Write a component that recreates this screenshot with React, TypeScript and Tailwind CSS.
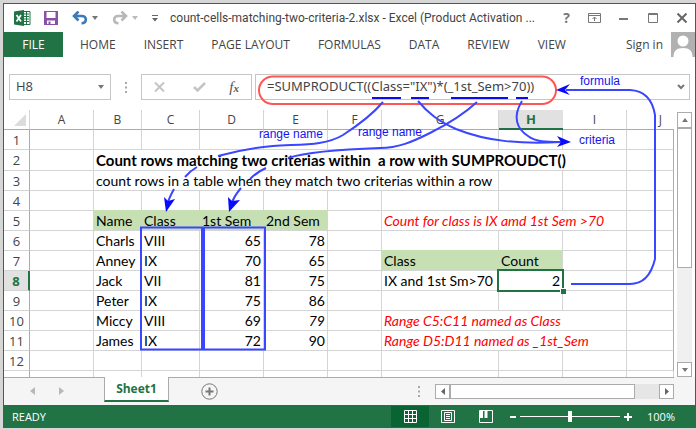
import { Fragment } from 'react';

const tabs = ['HOME', 'INSERT', 'PAGE LAYOUT', 'FORMULAS', 'DATA', 'REVIEW', 'VIEW'];

const columns = [
  { name: 'A', width: 'w-16' },
  { name: 'B', width: 'w-12' },
  { name: 'C', width: 'w-[58px]' },
  { name: 'D', width: 'w-16' },
  { name: 'E', width: 'w-16' },
  { name: 'F', width: 'w-[54px]' },
  { name: 'G', width: 'w-[117px]' },
  { name: 'H', width: 'w-16' },
  { name: 'I', width: 'w-16' },
  { name: 'J', width: '' },
];

type Cell = { text: string; span?: number; className?: string };

const head = 'bg-[#c6e0b4] border-[#c6e0b4] shadow-[-1px_-1px_0_#c6e0b4]';
const note = 'italic text-[#f00]';

const cells: Record<string, Cell> = {
  B2: { text: 'Count rows matching two criterias within\u00a0 a row with SUMPROUDCT()', span: 8, className: 'text-[15px] font-bold' },
  B3: { text: 'count rows in a table when they match two criterias within a row', span: 6 },
  B5: { text: 'Name', className: head },
  C5: { text: 'Class', className: head },
  D5: { text: '1st Sem', className: head },
  E5: { text: '2nd Sem', className: head },
  G5: { text: 'Count for class is IX amd 1st Sem >70', span: 3, className: note },
  G7: { text: 'Class', className: head },
  H7: { text: 'Count', className: head },
  G8: { text: 'IX and 1st Sm>70' },
  H8: { text: '2', className: 'text-right' },
  G10: { text: 'Range C5:C11 named as Class', span: 3, className: note },
  G11: { text: 'Range D5:D11 named as _1st_Sem', span: 3, className: note },
};

const students = [
  ['Charls', 'VIII', '65', '78'],
  ['Anney', 'IX', '70', '65'],
  ['Jack', 'VII', '81', '75'],
  ['Peter', 'IX', '75', '86'],
  ['Miccy', 'VIII', '69', '79'],
  ['James', 'IX', '72', '90'],
];

students.forEach(([name, grade, first, second], i) => {
  const row = i + 6;
  cells[`B${row}`] = { text: name };
  cells[`C${row}`] = { text: grade };
  cells[`D${row}`] = { text: first, className: 'text-right' };
  cells[`E${row}`] = { text: second, className: second === '79' ? 'text-right italic' : 'text-right' };
});

function Caret({ className }: { className?: string }) {
  return (
    <svg className={className} width="6" height="4" viewBox="0 0 6 4" fill="currentColor">
      <path d="M0 0h6L3 4z" />
    </svg>
  );
}

function Dots() {
  return (
    <svg width="2" height="11" viewBox="0 0 2 11" fill="#a8a8a8">
      <path d="M0 0h2v2H0zM0 4.500h2v2H0zM0 9h2v2H0z" />
    </svg>
  );
}

function TitleBar() {
  return (
    <div className="flex h-7 items-center pl-[10px] pr-2 text-[#777]">
      <svg width="17" height="16" viewBox="0 0 17 16">
        <path d="M9 1.500h7v13H9z" fill="#fff" stroke="#217346" />
        <path d="M10 4h5M10 6.500h5M10 9h5M10 11.500h5M12.500 2v12" stroke="#217346" />
        <path d="M0 1.500 10 0v16L0 14.500z" fill="#217346" />
        <path d="m2.500 5 4.500 6.500M7 5l-4.500 6.500" stroke="#fff" strokeWidth="1.700" />
      </svg>
      <button aria-label="Save" className="ml-[13px]">
        <svg width="14" height="14" viewBox="0 0 14 14">
          <path d="M0 0h14v14H0z" fill="#8a50a8" />
          <path d="M2.500 1h9v6h-9zM3 9.500h8V13H6.500v-2.500h-2V13H3z" fill="#fff" />
        </svg>
      </button>
      <button aria-label="Undo" className="ml-[14px]">
        <svg width="16" height="14" viewBox="0 0 16 14" fill="none" stroke="#3c7ab8" strokeWidth="2.600">
          <path d="M6.500.5 2 5l4.500 4.500M2.500 5H9.500c3 0 4.300 1.300 4.300 3.600 0 2.500-1.800 3.700-4.300 3.700" />
        </svg>
      </button>
      <Caret className="ml-1" />
      <button aria-label="Redo" className="ml-[14px]">
        <svg width="16" height="14" viewBox="0 0 16 14" fill="none" stroke="#b8b8b8" strokeWidth="2.600">
          <path d="M9.500.5 14 5 9.500 9.500M13.500 5H6.500C3.500 5 2.200 6.300 2.200 8.600c0 2.500 1.800 3.700 4.300 3.700" />
        </svg>
      </button>
      <Caret className="ml-1 text-[#bbb]" />
      <svg className="ml-[14px]" width="6" height="7" viewBox="0 0 6 7" fill="#666">
        <path d="M0 0h6v1H0zM0 3h6L3 6.500z" />
      </svg>
      <h1 className="ml-3 flex-1 truncate font-[Roboto,sans-serif] text-[12px] leading-4 text-[#444]">
        count-cells-matching-two-criteria-2.xlsx - Excel (Product Activation ...
      </h1>
      <div className="flex items-center">
        <button aria-label="Help" className="mr-[18px] text-[14px] leading-4 font-bold">?</button>
        <button aria-label="Ribbon display options" className="mr-[18px]">
          <svg width="13" height="10" viewBox="0 0 13 10" fill="none" stroke="#777">
            <path d="M.5.5h12v9H.5zM1 2.500h11M6.500 8V4M4.500 6l2-2 2 2" />
          </svg>
        </button>
        <button aria-label="Minimize" className="mr-5">
          <svg width="9" height="10" viewBox="0 0 9 10"><path d="M0 5h9v2H0z" fill="#777" /></svg>
        </button>
        <button aria-label="Maximize" className="mr-[19px]">
          <svg width="10" height="10" viewBox="0 0 10 10" fill="none" stroke="#777">
            <path d="M.5.5h9v9h-9zM0 1.500h10" />
          </svg>
        </button>
        <button aria-label="Close">
          <svg width="10" height="10" viewBox="0 0 10 10" stroke="#666" strokeWidth="2">
            <path d="m.5.5 9 9M9.500.5l-9 9" />
          </svg>
        </button>
      </div>
    </div>
  );
}

function Ribbon() {
  return (
    <div className="flex h-[25px] items-center text-[12px] leading-4 text-[#444]">
      <button className="h-full w-[59px] bg-[#217346] text-white">FILE</button>
      <nav className="ml-[17px] flex flex-1 gap-7 whitespace-nowrap">
        {tabs.map((tab) => (
          <button key={tab}>{tab}</button>
        ))}
      </nav>
      <button className="mr-2">Sign in</button>
      <svg width="24" height="25" viewBox="0 0 24 25">
        <path d="M0 0h24v25H0z" fill="#b1b1b1" />
        <circle cx="12" cy="9" r="5.500" fill="#fff" />
        <path d="M2.500 25c0-6 3-9 9.500-9s9.500 3 9.500 9z" fill="#fff" />
      </svg>
    </div>
  );
}

function FormulaBar() {
  return (
    <div className="mt-[17px] mb-[10px] flex h-[26px] items-stretch px-[5px] text-[#444]">
      <div className="flex w-[102px] items-center border border-[#c6c6c6]">
        <input aria-label="Name box" defaultValue="H8" className="w-full min-w-0 bg-transparent pl-1.5 text-[13px] outline-none" />
        <Caret className="mr-1.5 shrink-0 text-[#777]" />
      </div>
      <div className="flex w-[30px] items-center justify-center">
        <Dots />
      </div>
      <div className="flex w-[111px] items-center justify-between border border-[#c6c6c6] px-3">
        <button aria-label="Cancel">
          <svg width="11" height="10" viewBox="0 0 11 10" stroke="#c4c4c4" strokeWidth="2">
            <path d="m1 .5 9 9M10 .5l-9 9" />
          </svg>
        </button>
        <button aria-label="Enter" className="ml-1">
          <svg width="13" height="10" viewBox="0 0 13 10" fill="none" stroke="#c4c4c4" strokeWidth="2.500">
            <path d="m1 5 3.500 3.500L12 1" />
          </svg>
        </button>
        <button aria-label="Insert function" className="font-['Liberation_Serif',serif] text-[15px] leading-4 text-[#555] italic">
          f<span className="text-[11px] font-bold">x</span>
        </button>
      </div>
      <div className="ml-[3px] flex flex-1 items-center border border-[#c6c6c6]">
        <input
          aria-label="Formula"
          defaultValue={'=SUMPRODUCT((Class="IX")*(_1st_Sem>70))'}
          className="w-full min-w-0 bg-transparent pl-[11px] font-['Noto_Sans',sans-serif] text-[13px] outline-none"
        />
        <svg className="mr-1 shrink-0" width="8" height="6" viewBox="0 0 8 6" fill="none" stroke="#777" strokeWidth="2">
          <path d="m1 1 3 3 3-3" />
        </svg>
      </div>
    </div>
  );
}

function SheetRow({ row }: { row: number }) {
  const active = row === 8;
  let skip = 0;
  return (
    <tr className={row === 2 ? 'h-[21px]' : 'h-5'}>
      <th
        scope="row"
        className={
          active
            ? "border-r-2 border-b border-r-[#217346] border-b-[#d4d4d4] bg-[#e1e1e1] p-0 font-['Open_Sans',sans-serif] text-[13px] font-bold text-[#217346]"
            : "border-r border-b border-r-[#ababab] border-b-[#d4d4d4] p-0 font-['Open_Sans',sans-serif] text-[13px] font-normal text-[#444]"
        }
      >
        {row}
      </th>
      {columns.map(({ name }) => {
        if (skip > 0) {
          skip--;
          return null;
        }
        const cell = cells[`${name}${row}`];
        if (cell?.span) skip = cell.span - 1;
        return (
          <td
            key={name}
            colSpan={cell?.span}
            className={`relative border-r border-b px-0.5 py-0 whitespace-nowrap ${
              name === 'J' ? 'border-r-[#ababab] border-b-[#d4d4d4]' : 'border-[#d4d4d4]'
            } ${cell?.className ?? ''}`}
          >
            {cell?.text}
            {name === 'H' && active && (
              <Fragment>
                <span className="absolute -inset-x-0.5 -inset-y-0.5 z-10 border-2 border-[#217346]" />
                <span className="absolute -right-1 -bottom-1 z-10 h-1.5 w-1.5 border-t border-l border-white bg-[#217346]" />
              </Fragment>
            )}
          </td>
        );
      })}
    </tr>
  );
}

function Sheet() {
  return (
    <table className="min-w-0 flex-1 table-fixed border-separate border-spacing-0 font-[Lato,sans-serif] text-[14px] leading-[18px] text-black">
      <colgroup>
        <col className="w-[26px]" />
        {columns.map(({ name, width }) => (
          <col key={name} className={width} />
        ))}
      </colgroup>
      <thead>
        <tr className="h-5 font-['Open_Sans',sans-serif] text-[12px] text-[#444]">
          <td className="border-r border-b border-r-[#d4d4d4] border-b-[#ababab] p-0">
            <svg className="ml-[10px]" width="12" height="12" viewBox="0 0 12 12">
              <path d="M12 0v12H0z" fill="#dcdcdc" />
            </svg>
          </td>
          {columns.map(({ name }) => (
            <th
              key={name}
              scope="col"
              className={
                name === 'H'
                  ? 'border-b-2 border-[#217346] bg-[#e1e1e1] p-0 text-[13px] font-bold text-[#217346]'
                  : name === 'J'
                    ? 'border-b border-[#ababab] py-0 pr-3 pl-0 text-right font-normal'
                    : 'border-r border-b border-r-[#d4d4d4] border-b-[#ababab] p-0 font-normal'
              }
            >
              {name}
            </th>
          ))}
        </tr>
      </thead>
      <tbody>
        {[1, 2, 3, 4, 5, 6, 7, 8, 9, 10, 11, 12].map((row) => (
          <SheetRow key={row} row={row} />
        ))}
        <tr className="h-1.5">
          <td className="border-r border-[#ababab] p-0" />
          {columns.map(({ name }) => (
            <td key={name} className="border-r border-[#d4d4d4] p-0" />
          ))}
        </tr>
      </tbody>
    </table>
  );
}

function VerticalScroll() {
  return (
    <div className="mt-0.5 mr-[3px] ml-[3px] flex w-[15px] flex-col bg-[#f0f0f0]">
      <button aria-label="Scroll up" className="flex h-4 items-center justify-center border border-[#ababab] bg-white text-[#777]">
        <Caret className="rotate-180" />
      </button>
      <div className="h-[140px] border border-[#ababab] bg-white" />
      <div className="flex-1" />
      <button aria-label="Scroll down" className="flex h-[15px] items-center justify-center border border-[#ababab] bg-white text-[#777]">
        <Caret />
      </button>
    </div>
  );
}

function SheetTabs() {
  return (
    <div className="flex h-7 items-start bg-[#f5f5f5]">
      <div className="flex h-[27px] w-[100px] items-center gap-[24px] border-t border-[#ababab] pl-[26px]">
        <button aria-label="Previous sheet">
          <svg width="5" height="8" viewBox="0 0 5 8"><path d="M5 0v8L0 4z" fill="#b8b8b8" /></svg>
        </button>
        <button aria-label="Next sheet">
          <svg width="5" height="8" viewBox="0 0 5 8"><path d="M0 0v8l5-4z" fill="#b8b8b8" /></svg>
        </button>
      </div>
      <button className="h-[25px] w-[65px] border-x border-b-2 border-x-[#ababab] border-b-[#217346] bg-white text-[12px] leading-4 font-bold text-[#217346]">
        Sheet1
      </button>
      <div className="mr-[21px] flex h-[27px] flex-1 items-center border-t border-[#ababab] pl-8">
        <button aria-label="New sheet">
          <svg width="17" height="17" viewBox="0 0 17 17" fill="none" stroke="#777">
            <circle cx="8.500" cy="8.500" r="7.700" />
            <path d="M4.500 8.500h8M8.500 4.500v8" strokeWidth="2" />
          </svg>
        </button>
        <div className="mr-[15px] ml-auto"><Dots /></div>
        <div className="flex h-[15px] w-[239px] bg-[#e6e6e6]">
          <button aria-label="Scroll left" className="flex w-[15px] items-center justify-center border border-[#ababab] bg-white">
            <svg width="4" height="7" viewBox="0 0 4 7"><path d="M4 0v7L0 3.500z" fill="#666" /></svg>
          </button>
          <div className="w-[185px] border border-[#ababab] bg-white" />
          <button aria-label="Scroll right" className="ml-auto flex w-[15px] items-center justify-center border border-[#ababab] bg-white">
            <svg width="4" height="7" viewBox="0 0 4 7"><path d="M0 0v7l4-3.500z" fill="#666" /></svg>
          </button>
        </div>
      </div>
    </div>
  );
}

function StatusBar() {
  return (
    <div className="flex h-[23px] items-center bg-[#217346] pl-2 text-[11px] leading-4 text-white">
      <span className="flex-1">READY</span>
      <button aria-label="Normal view" className="flex h-[21px] w-[38px] items-center justify-center bg-[#0a6332]">
        <svg width="13" height="13" viewBox="0 0 13 13" fill="none" stroke="#fff">
          <path d="M.5.5h12v12H.5zM4.500 0v13M8.500 0v13M0 4.500h13M0 8.500h13" />
        </svg>
      </button>
      <button aria-label="Page layout view" className="ml-3">
        <svg width="14" height="13" viewBox="0 0 14 13" fill="none" stroke="#fff">
          <path d="M.5.5h13v12H.5zM3.500 2.500h7v8h-7zM5 4.500h4M5 6.500h4M5 8.500h4" />
        </svg>
      </button>
      <button aria-label="Page break view" className="ml-6">
        <svg width="14" height="13" viewBox="0 0 14 13" fill="none" stroke="#fff">
          <path d="M.5.5h13v12H.5z" />
          <path d="M1 1h3v7H1zM5.500 1h3v7h-3z" fill="#fff" stroke="none" />
        </svg>
      </button>
      <button aria-label="Zoom out" className="ml-[17px]">
        <svg width="6" height="8" viewBox="0 0 6 8"><path d="M0 3h6v2H0z" fill="#fff" /></svg>
      </button>
      <input
        type="range"
        aria-label="Zoom"
        defaultValue={50}
        className="mx-1 h-3 w-[100px] appearance-none bg-[linear-gradient(#fff,#fff)] bg-[length:100%_1px] bg-center bg-no-repeat [&::-webkit-slider-thumb]:h-[11px] [&::-webkit-slider-thumb]:w-1 [&::-webkit-slider-thumb]:appearance-none [&::-webkit-slider-thumb]:bg-white"
      />
      <button aria-label="Zoom in">
        <svg width="8" height="8" viewBox="0 0 8 8"><path d="M0 3h8v2H0zM3 0h2v8H3z" fill="#fff" /></svg>
      </button>
      <button className="mr-5 ml-[15px] w-7">100%</button>
    </div>
  );
}

// Hand-drawn notes that explain the formula, laid over the workbook
function Annotations() {
  return (
    <div className="pointer-events-none absolute top-0 left-0 z-20 font-['Liberation_Sans',sans-serif] text-[12px] leading-4 whitespace-nowrap text-[#1414f0]">
      <svg width="696" height="430" viewBox="0 0 696 430" fill="none" stroke="#3a46ff" strokeWidth="2">
        <rect x="259" y="76.500" width="297" height="27.500" rx="14" stroke="#ff5555" />
        <path d="M372 98h29M411 98h18M451 98h57M516 98h12" stroke="#0a0af5" />
        <path d="M383 102C372 115 360 124 343 135C325 146 300 144 273 146C250 148 232 152 218 156M197 167q-7 4-12 10M174 189q-5 9-7 16" />
        <path d="M477 102C464 114 448 124 430 133C412 142 398 148 380 148C350 149 310 151 288 158M266 168q-9 4-16 11M241 188q-7 8-10 17" />
        <path d="M418 101c10 12 20 20 38 28 32 13 66 15 105 13" />
        <path d="M522 101c-10 16-5 28 6 35 8 6 18 6 33 6" />
        <path d="M571 284h59q19 0 25-25V115q-4-24-25-25h-64" />
        <path d="M141 227.500h61v122h-61zM204 227.500h61v122h-61z" />
        <path
          d="m166 212-2-15 4 4 7-2zM229 212l-1-15 4 4 8-1zM571 142l-14-6 4 6-4 5zM556 90l14-6-5 6 5 5z"
          fill="#0a0aff"
          stroke="none"
        />
      </svg>
      <span className="absolute top-[73px] left-[580px]">formula</span>
      <span className="absolute top-[126px] left-[259px]">range name</span>
      <span className="absolute top-[124px] left-[358px]">range name</span>
      <span className="absolute top-[132px] left-[579px]">criteria</span>
    </div>
  );
}

export default function App() {
  return (
    <div className="relative bg-[#d6d6d6] pt-[3px] pb-0.5 pl-[3px] font-['Open_Sans',sans-serif]">
      <div className="border-x border-t border-[#217346] bg-white">
        <TitleBar />
        <Ribbon />
        <FormulaBar />
        <div className="flex items-stretch">
          <Sheet />
          <VerticalScroll />
        </div>
        <SheetTabs />
        <StatusBar />
      </div>
      <Annotations />
    </div>
  );
}
